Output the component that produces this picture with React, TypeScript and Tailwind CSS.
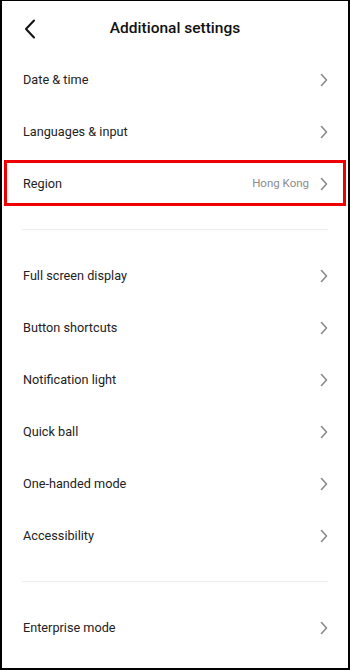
import React from "react";

const font = { fontFamily: "Roboto, 'Noto Sans', sans-serif" };

function Chevron() {
  return (
    <svg width="10" height="14" viewBox="0 0 10 14" className="shrink-0">
      <path d="M2.5 1.5 L7.5 7 L2.5 12.5" fill="none" stroke="#8a8a8a" strokeWidth="1.6" strokeLinecap="round" strokeLinejoin="round" />
    </svg>
  );
}

function Row({ label, value, highlight }: { label: string; value?: string; highlight?: boolean }) {
  return (
    <div className="relative flex h-[52px] items-center justify-between pl-[21px] pr-[19px] pt-[2px]">
      <span className="text-[12.7px] text-[#222]">{label}</span>
      <div className="flex items-center gap-[10px]">
        {value && <span className="text-[11.5px] text-[#8c8c8c]">{value}</span>}
        <Chevron />
      </div>
      {highlight && (
        <div className="pointer-events-none absolute left-[2px] right-[2px] top-[3px] bottom-[3px] border-[3px] border-[#ee0000]" />
      )}
    </div>
  );
}

function Divider() {
  return (
    <div className="flex h-[40px] items-center px-[20px]">
      <div className="h-px w-full bg-[#ececec]" />
    </div>
  );
}

export default function App() {
  return (
    <div
      style={font}
      className="box-border h-[670px] w-[350px] overflow-hidden border-b-2 border-l-2 border-r-2 border-t border-black bg-white"
    >
      <div className="relative flex h-[52px] items-center justify-center pt-[3px]">
        <svg width="14" height="20" viewBox="0 0 14 20" className="absolute left-[21px] top-[18px]">
          <path d="M11 1.5 L3 10 L11 18.5" fill="none" stroke="#111" strokeWidth="2" strokeLinecap="round" strokeLinejoin="round" />
        </svg>
        <span className="text-[15.5px] font-medium text-[#111]">Additional settings</span>
      </div>
      <Row label="Date & time" />
      <Row label="Languages & input" />
      <Row label="Region" value="Hong Kong" highlight />
      <Divider />
      <Row label="Full screen display" />
      <Row label="Button shortcuts" />
      <Row label="Notification light" />
      <Row label="Quick ball" />
      <Row label="One-handed mode" />
      <Row label="Accessibility" />
      <Divider />
      <Row label="Enterprise mode" />
    </div>
  );
}
